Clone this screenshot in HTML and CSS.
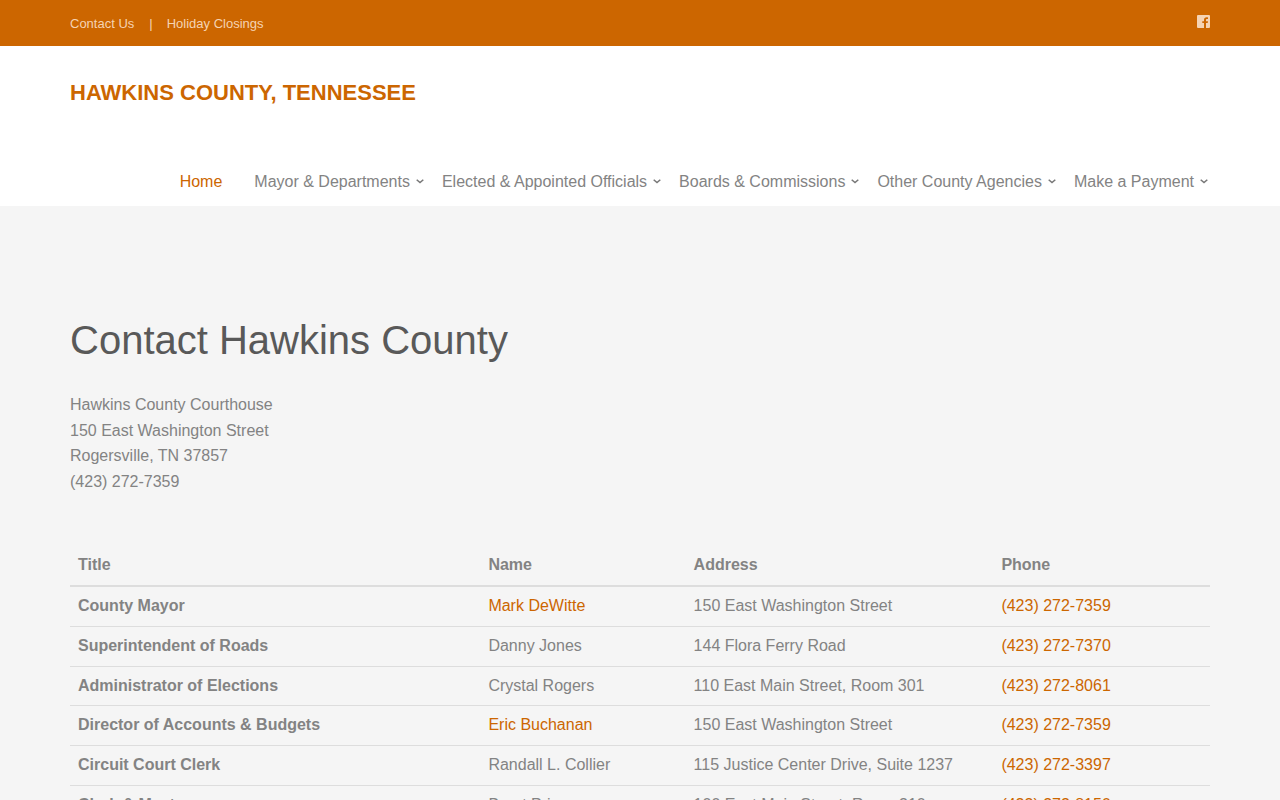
FILE: index.html
```html
<!DOCTYPE html>
<html lang="en">
  <head>
    <meta charset="UTF-8" />
    <title>Contact Hawkins County</title>
    <meta name="viewport" content="width=device-width, initial-scale=1.0" />
    <link rel="stylesheet" href="styles.css">
  </head>
  <body>
    <div class="topbar">
      <div class="container topbar-inner">
        <ul class="top-links">
          <li><a href="#contact">Contact Us</a></li>
          <li><a href="#closings">Holiday Closings</a></li>
        </ul>
        <a class="social" href="#facebook" aria-label="Facebook">
          <svg width="13" height="13" viewBox="0 0 13 13" aria-hidden="true">
            <path d="M1 0H12Q13 0 13 1V12Q13 13 12 13H9V8H10.7L11 6.2H9V5.1C9 4.4 9.3 4.1 10 4.1H11V2.4C10.6 2.3 10.2 2.3 9.6 2.3C8 2.3 7 3.2 7 4.8V6.2H5.3V8H7V13H1Q0 13 0 12V1Q0 0 1 0Z" />
          </svg>
        </a>
      </div>
    </div>

    <header class="header">
      <div class="container">
        <a class="brand" href="#home">HAWKINS COUNTY, TENNESSEE</a>
        <nav class="nav">
          <a class="active" href="#home">Home</a>
          <a class="dropdown" href="#mayor">Mayor &amp; Departments
            <svg class="chevron" viewBox="0 0 8 6" aria-hidden="true"><path d="M.7 .7L4 3.6L7.3 .7" /></svg></a>
          <a class="dropdown" href="#officials">Elected &amp; Appointed Officials
            <svg class="chevron" viewBox="0 0 8 6" aria-hidden="true"><path d="M.7 .7L4 3.6L7.3 .7" /></svg></a>
          <a class="dropdown" href="#boards">Boards &amp; Commissions
            <svg class="chevron" viewBox="0 0 8 6" aria-hidden="true"><path d="M.7 .7L4 3.6L7.3 .7" /></svg></a>
          <a class="dropdown" href="#agencies">Other County Agencies
            <svg class="chevron" viewBox="0 0 8 6" aria-hidden="true"><path d="M.7 .7L4 3.6L7.3 .7" /></svg></a>
          <a class="dropdown" href="#payment">Make a Payment
            <svg class="chevron" viewBox="0 0 8 6" aria-hidden="true"><path d="M.7 .7L4 3.6L7.3 .7" /></svg></a>
        </nav>
      </div>
    </header>

    <main class="container content" id="contact">
      <h1>Contact Hawkins County</h1>
      <p class="address">
        Hawkins County Courthouse<br />
        150 East Washington Street<br />
        Rogersville, TN 37857<br />
        (423) 272-7359
      </p>

      <table class="table">
        <thead>
          <tr>
            <th class="col-title" scope="col">Title</th>
            <th class="col-name" scope="col">Name</th>
            <th class="col-address" scope="col">Address</th>
            <th scope="col">Phone</th>
          </tr>
        </thead>
        <tbody>
          <tr>
            <th scope="row">County Mayor</th>
            <td><a href="#mayor">Mark DeWitte</a></td>
            <td>150 East Washington Street</td>
            <td><a href="tel:4232727359">(423) 272-7359</a></td>
          </tr>
          <tr>
            <th scope="row">Superintendent of Roads</th>
            <td>Danny Jones</td>
            <td>144 Flora Ferry Road</td>
            <td><a href="tel:4232727370">(423) 272-7370</a></td>
          </tr>
          <tr>
            <th scope="row">Administrator of Elections</th>
            <td>Crystal Rogers</td>
            <td>110 East Main Street, Room 301</td>
            <td><a href="tel:4232728061">(423) 272-8061</a></td>
          </tr>
          <tr>
            <th scope="row">Director of Accounts &amp; Budgets</th>
            <td><a href="#budgets">Eric Buchanan</a></td>
            <td>150 East Washington Street</td>
            <td><a href="tel:4232727359">(423) 272-7359</a></td>
          </tr>
          <tr>
            <th scope="row">Circuit Court Clerk</th>
            <td>Randall L. Collier</td>
            <td>115 Justice Center Drive, Suite 1237</td>
            <td><a href="tel:4232723397">(423) 272-3397</a></td>
          </tr>
          <tr>
            <th scope="row">Clerk &amp; Master</th>
            <td>Brent Price</td>
            <td>100 East Main Street, Room 310</td>
            <td><a href="tel:4232728150">(423) 272-8150</a></td>
          </tr>
        </tbody>
      </table>
    </main>
  </body>
</html>
```
FILE: styles.css
```css
* {
  box-sizing: border-box;
}

body {
  margin: 0;
  background: #f5f5f5;
  color: #838383;
  font-family: "Liberation Sans", Arial, sans-serif;
  font-size: 16px;
  line-height: 1.6;
}

a {
  color: #cc6600;
  text-decoration: none;
}

.container {
  max-width: 1170px;
  margin: 0 auto;
  padding: 0 15px;
}

.topbar {
  background: #cc6600;
  font-size: 13px;
}

.topbar-inner {
  display: flex;
  justify-content: space-between;
  align-items: flex-start;
  padding-top: 14px;
  padding-bottom: 12px;
  line-height: 20px;
}

.top-links {
  display: flex;
  margin: 0;
  padding: 0;
  list-style: none;
  color: #f5d3b3;
}

.top-links a {
  color: #f5d3b3;
}

.top-links li + li::before {
  content: "|";
  margin: 0 14px 0 15px;
}

.social {
  padding-top: 1px;
  line-height: 0;
}

.social svg {
  fill: #f5d3b3;
}

.header {
  background: #fff;
  padding: 29px 0 11px;
}

.brand {
  display: block;
  font-size: 22px;
  font-weight: bold;
  line-height: 36px;
}

.nav {
  display: flex;
  justify-content: flex-end;
  flex-wrap: wrap;
  margin-top: 58px;
  line-height: 26px;
}

.nav a {
  margin-left: 16px;
  padding-right: 16px;
  color: #838383;
}

.nav .active {
  color: #cc6600;
}

.nav .dropdown {
  display: flex;
  align-items: center;
  gap: 6px;
  padding-right: 2px;
}

.chevron {
  width: 8px;
  height: 6px;
  fill: none;
  stroke: #777;
  stroke-width: 1.5;
}

.content {
  padding-top: 110px;
  padding-bottom: 60px;
}

h1 {
  margin: 0 0 28px;
  color: #595959;
  font-size: 40px;
  font-weight: normal;
  line-height: 48px;
}

.address {
  margin: 0 0 52px;
}

.table {
  width: 100%;
  border-collapse: collapse;
  table-layout: fixed;
  line-height: 1.42;
}

.table th,
.table td {
  padding: 8px;
  border-top: 1px solid #ddd;
  text-align: left;
  vertical-align: top;
}

.table thead th {
  border-top: 0;
  border-bottom: 2px solid #ddd;
}

.col-title {
  width: 36%;
}

.col-name {
  width: 18%;
}

.col-address {
  width: 27%;
}
```
